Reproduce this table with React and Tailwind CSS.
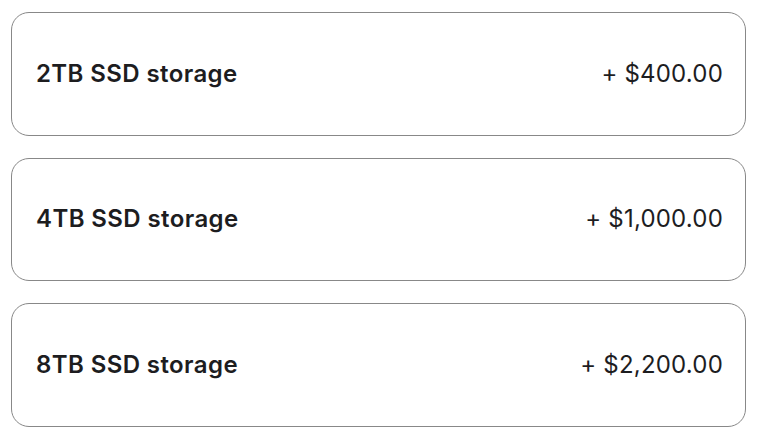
export default function App() {
  const options = [
    { label: '2TB SSD storage', price: '+ $400.00' },
    { label: '4TB SSD storage', price: '+ $1,000.00' },
    { label: '8TB SSD storage', price: '+ $2,200.00' },
  ];

  return (
    <div className="w-[761px] h-[443px] bg-white px-[11px] pt-[12px] font-['Inter',sans-serif] text-[#1d1d1f]">
      <div className="flex w-[735px] flex-col gap-[22px]">
        {options.map((opt) => (
          <div
            key={opt.label}
            className="flex h-[123.5px] items-center justify-between rounded-[18px] border border-[#888888] pl-[24px] pr-[22px]"
          >
            <span className="text-[24px] font-semibold tracking-[0.4px]">{opt.label}</span>
            <span className="text-[24px] font-normal tracking-[0.2px]">{opt.price}</span>
          </div>
        ))}
      </div>
    </div>
  );
}
